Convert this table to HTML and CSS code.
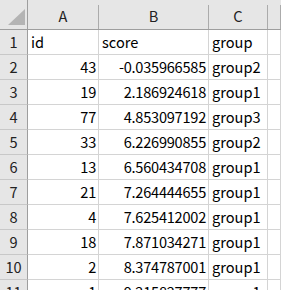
FILE: index.html
```html
<!DOCTYPE html>
<html>
<head>
<meta charset="utf-8">
<link rel="stylesheet" href="styles.css">
</head>
<body>
<div class="sheet">
  <div class="corner"><svg width="27" height="29" viewBox="0 0 27 29"><polygon points="8,25 25,25 25,9" fill="#b4b4b4"/></svg></div>
  <div class="colh">A</div>
  <div class="colh">B</div>
  <div class="colh">C</div>
  <div class="colh last"></div>

  <div class="rowh">1</div><div class="c">id</div><div class="c">score</div><div class="c">group</div><div class="c"></div>
  <div class="rowh">2</div><div class="c n">43</div><div class="c n">-0.035966585</div><div class="c">group2</div><div class="c"></div>
  <div class="rowh">3</div><div class="c n">19</div><div class="c n">2.186924618</div><div class="c">group1</div><div class="c"></div>
  <div class="rowh">4</div><div class="c n">77</div><div class="c n">4.853097192</div><div class="c">group3</div><div class="c"></div>
  <div class="rowh">5</div><div class="c n">33</div><div class="c n">6.226990855</div><div class="c">group2</div><div class="c"></div>
  <div class="rowh">6</div><div class="c n">13</div><div class="c n">6.560434708</div><div class="c">group1</div><div class="c"></div>
  <div class="rowh">7</div><div class="c n">21</div><div class="c n">7.264444655</div><div class="c">group1</div><div class="c"></div>
  <div class="rowh">8</div><div class="c n">4</div><div class="c n">7.625412002</div><div class="c">group1</div><div class="c"></div>
  <div class="rowh">9</div><div class="c n">18</div><div class="c n">7.871034271</div><div class="c">group1</div><div class="c"></div>
  <div class="rowh">10</div><div class="c n">2</div><div class="c n">8.374787001</div><div class="c">group1</div><div class="c"></div>
  <div class="rowh">11</div><div class="c n">1</div><div class="c n">9.215827777</div><div class="c">group1</div><div class="c"></div>
</div>
</body>
</html>
```

FILE: styles.css
```css
html, body {
  margin: 0;
  padding: 0;
  background: #fff;
  overflow: hidden;
  height: 290px;
}
.sheet {
  display: grid;
  grid-template-columns: 28px 71px 110px 59px 1fr;
  grid-template-rows: 30px repeat(11, 25px);
  font-family: "Noto Sans CJK JP", "Noto Sans", sans-serif;
  font-size: 14.6px;
  color: #000;
  width: 281px;
}
.corner {
  background: #e6e6e6;
  border-right: 1px solid #9e9e9e;
  border-bottom: 1px solid #9e9e9e;
  line-height: 0;
}
.colh {
  background: linear-gradient(#ababab, #ababab) right 5px / 1px calc(100% - 5px) no-repeat, #e6e6e6;
  border-bottom: 1px solid #9e9e9e;
  display: flex;
  align-items: center;
  justify-content: center;
  color: #222;
  padding-top: 2px;
  box-sizing: border-box;
  padding-right: 1px;
}
.rowh {
  background: #e6e6e6;
  border-right: 1px solid #9e9e9e;
  border-bottom: 1px solid #c8c8c8;
  display: flex;
  align-items: flex-end;
  justify-content: center;
  padding-bottom: 2px;
  color: #222;
}
.c {
  border-right: 1px solid #d4d4d4;
  border-bottom: 1px solid #d4d4d4;
  display: flex;
  align-items: flex-end;
  padding: 0 0 2px 3px;
  white-space: nowrap;
  overflow: hidden;
}
.c.n {
  justify-content: flex-end;
  padding: 0 2px 2px 0;
  letter-spacing: -0.25px;
}
```
